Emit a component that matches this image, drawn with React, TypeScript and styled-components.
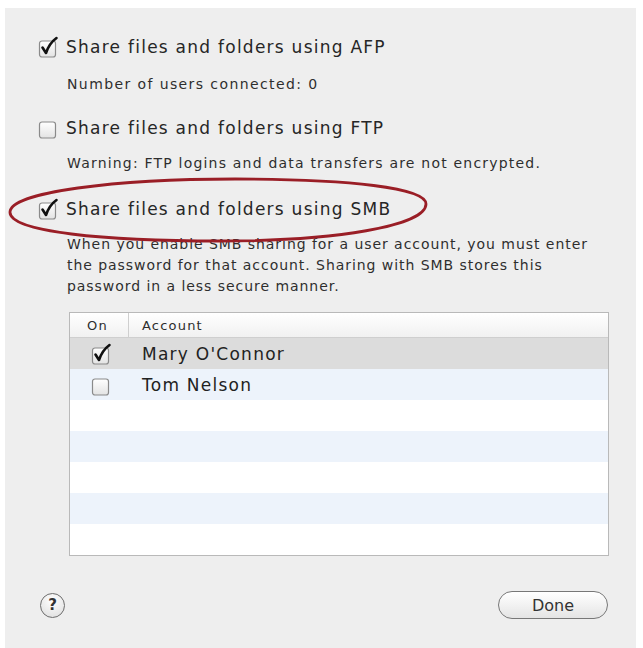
import React from 'react';
import styled, { createGlobalStyle } from 'styled-components';

const GlobalStyle = createGlobalStyle`
  html, body {
    margin: 0;
    padding: 0;
    background: #ffffff;
  }
  body {
    font-family: "DejaVu Sans", "Liberation Sans", sans-serif;
    color: #2b2b2b;
  }
`;

const Frame = styled.div`
  width: 643px;
  height: 648px;
  box-sizing: border-box;
  padding: 8px 7px 0 5px;
`;

const Panel = styled.div`
  height: 100%;
  box-sizing: border-box;
  background: #eeeeee;
  padding-top: 28px;
  display: flex;
  flex-direction: column;
`;

const Section = styled.div<{ $after?: number }>`
  position: relative;
  margin-bottom: ${(p) => p.$after ?? 24}px;
`;

const OptionRow = styled.div`
  display: flex;
  align-items: center;
  height: 22px;
  padding-left: 32px;
  gap: 7px;
`;

const Label = styled.span`
  font-size: 17px;
  letter-spacing: 1.25px;
  color: #262626;
`;

const Note = styled.p<{ $spacing: number; $gap?: number }>`
  margin: ${(p) => p.$gap ?? 14}px 0 0 0;
  padding-left: 62px;
  font-size: 14px;
  line-height: 21px;
  letter-spacing: ${(p) => p.$spacing}px;
  white-space: nowrap;
  color: #2e2e2e;
`;

const Ellipse = styled.svg`
  position: absolute;
  left: 0;
  top: -24px;
  overflow: visible;
  pointer-events: none;
`;

const Table = styled.div`
  margin: 15px 0 0 64px;
  width: 538px;
  border: 1px solid #b9b9b9;
  background: #fff;
`;

const HeaderRow = styled.div`
  display: flex;
  height: 24px;
  align-items: center;
  border-bottom: 1px solid #cfcfcf;
  background: linear-gradient(#ffffff, #f1f1f1);
  font-size: 13px;
  letter-spacing: 1.2px;
  color: #2e2e2e;
`;

const HeadCell = styled.div<{ $w?: number; $divider?: boolean }>`
  ${(p) => (p.$w ? `width: ${p.$w}px;` : 'flex: 1;')}
  height: 100%;
  display: flex;
  align-items: center;
  box-sizing: border-box;
  padding-left: ${(p) => (p.$divider ? 13 : 17)}px;
  ${(p) => (p.$divider ? 'border-left: 1px solid #cfcfcf;' : '')}
`;

const Row = styled.div<{ $bg: string }>`
  display: flex;
  align-items: center;
  height: 31px;
  background: ${(p) => p.$bg};
`;

const CheckCell = styled.div`
  width: 58px;
  display: flex;
  justify-content: center;
  padding-left: 4px;
  box-sizing: border-box;
`;

const Name = styled.span`
  padding-left: 14px;
  font-size: 17px;
  letter-spacing: 1.25px;
  color: #222;
`;

const Footer = styled.div`
  display: flex;
  align-items: center;
  justify-content: space-between;
  margin-top: auto;
  height: 30px;
  margin-bottom: 28px;
  padding: 0 28px 0 35px;
`;

const HelpButton = styled.button`
  width: 25px;
  height: 25px;
  border-radius: 50%;
  border: 1.5px solid #6d6d6d;
  background: radial-gradient(circle at 50% 30%, #ffffff, #dcdcdc);
  font-family: "DejaVu Sans", sans-serif;
  font-weight: bold;
  font-size: 15px;
  color: #333;
  padding: 0;
  display: flex;
  align-items: center;
  justify-content: center;
`;

const DoneButton = styled.button`
  width: 110px;
  height: 28px;
  border-radius: 14px;
  border: 1.5px solid #777;
  background: linear-gradient(#ffffff, #f2f2f2 50%, #e4e4e4);
  font-family: "DejaVu Sans", sans-serif;
  font-size: 16px;
  color: #333;
  padding: 0;
`;

const Check = ({ on }: { on: boolean }) => (
  <svg width="22" height="22" viewBox="0 0 22 22">
    <defs>
      <linearGradient id="cbg" x1="0" y1="0" x2="0" y2="1">
        <stop offset="0" stopColor="#ffffff" />
        <stop offset="1" stopColor="#e3e3e3" />
      </linearGradient>
    </defs>
    <rect x="2.5" y="5" width="16" height="16" rx="2.5" fill="url(#cbg)" stroke="#8a8a8a" strokeWidth="1.2" />
    {on && (
      <path
        d="M5.5 11.5 L9 17 C11 11 14 6 19.5 2"
        fill="none"
        stroke="#111"
        strokeWidth="2.6"
        strokeLinecap="round"
        strokeLinejoin="round"
      />
    )}
  </svg>
);

const stripes = ['#dcdcdc', '#edf3fb', '#ffffff', '#edf3fb', '#ffffff', '#edf3fb', '#ffffff'];
const accounts = [
  { name: "Mary O'Connor", on: true },
  { name: 'Tom Nelson', on: false },
];

const App: React.FC = () => (
  <>
    <GlobalStyle />
    <Frame>
      <Panel>
        <Section $after={22}>
          <OptionRow>
            <Check on />
            <Label>Share files and folders using AFP</Label>
          </OptionRow>
          <Note $spacing={1.4} $gap={16}>Number of users connected: 0</Note>
        </Section>
        <Section>
          <OptionRow>
            <Check on={false} />
            <Label>Share files and folders using FTP</Label>
          </OptionRow>
          <Note $spacing={1.2}>Warning: FTP logins and data transfers are not encrypted.</Note>
        </Section>
        <Section>
          <Ellipse width="430" height="74" viewBox="0 0 430 74">
            <path
              d="M5 38 C6 18 110 5 230 5 C345 5 421 14 421 30 C421 52 330 67 215 67 C100 67 4 58 5 38 Z"
              fill="none"
              stroke="#9a1e26"
              strokeWidth="2.8"
            />
          </Ellipse>
          <OptionRow>
            <Check on />
            <Label>Share files and folders using SMB</Label>
          </OptionRow>
          <Note $spacing={0.95}>
            When you enable SMB sharing for a user account, you must enter
            <br />
            the password for that account. Sharing with SMB stores this
            <br />
            password in a less secure manner.
          </Note>
          <Table>
            <HeaderRow>
              <HeadCell $w={58}>On</HeadCell>
              <HeadCell $divider>Account</HeadCell>
            </HeaderRow>
            {stripes.map((bg, i) => (
              <Row key={i} $bg={bg}>
                {accounts[i] && (
                  <>
                    <CheckCell>
                      <Check on={accounts[i].on} />
                    </CheckCell>
                    <Name>{accounts[i].name}</Name>
                  </>
                )}
              </Row>
            ))}
          </Table>
        </Section>
        <Footer>
          <HelpButton>?</HelpButton>
          <DoneButton>Done</DoneButton>
        </Footer>
      </Panel>
    </Frame>
  </>
);

export default App;
